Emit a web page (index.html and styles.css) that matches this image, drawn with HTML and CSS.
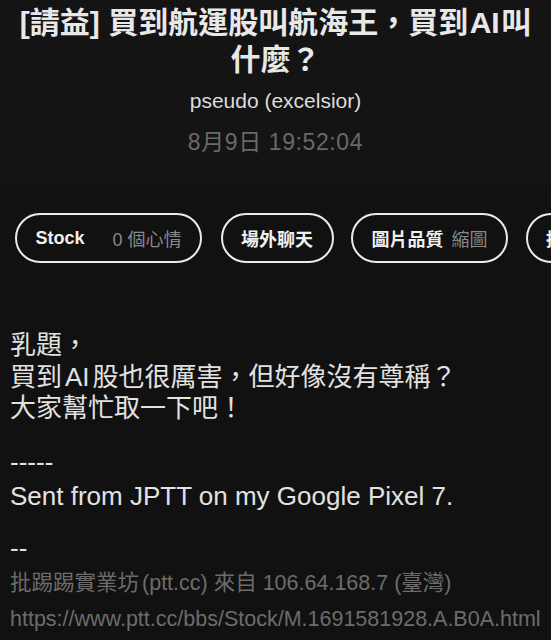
FILE: index.html
```html
<!DOCTYPE html>
<html lang="zh-Hant">
<head>
<meta charset="utf-8">
<title>[請益] 買到航運股叫航海王，買到AI叫什麼？</title>
<link rel="stylesheet" href="styles.css">
</head>
<body>
<div class="page">
  <header class="head">
    <h1 class="title">[請益] 買到航運股叫航海王，買到<span class="latin-t">AI</span>叫什麼？</h1>
    <div class="author">pseudo (excelsior)</div>
    <div class="date">8月9日 19:52:04</div>
  </header>
  <nav class="pills">
    <div class="pill"><span class="strong">Stock</span><span class="muted gap-l">0 個心情</span></div>
    <div class="pill"><span class="strong">場外聊天</span></div>
    <div class="pill"><span class="strong">圖片品質</span><span class="muted gap-s">縮圖</span></div>
    <div class="pill"><span class="strong">推文排序</span></div>
  </nav>
  <article class="body">
    <p class="para">乳題，<br>買到<span class="latin">AI</span>股也很厲害，但好像沒有尊稱？<br>大家幫忙取一下吧！</p>
    <p class="sig-block">-----<br>Sent from JPTT on my Google Pixel 7.</p>
    <p class="dashes">--</p>
    <p class="source">批踢踢實業坊<span class="latin-s">(ptt.cc)</span> 來自 106.64.168.7 (臺灣)</p>
    <p class="source">https://www.ptt.cc/bbs/Stock/M.1691581928.A.B0A.html</p>
  </article>
</div>
</body>
</html>
```
FILE: styles.css
```css
html, body {
  margin: 0;
  padding: 0;
  background: #111111;
}
body {
  font-family: "Liberation Sans", "Noto Sans CJK TC", sans-serif;
  color: #e2e2e2;
  width: 551px;
  height: 640px;
  overflow: hidden;
}
.page {
  display: flex;
  flex-direction: column;
}
.head {
  background: #141414;
  height: 185px;
  box-sizing: border-box;
  padding: 4px 12px 0;
  text-align: center;
}
.title {
  margin: 0;
  font-size: 30px;
  line-height: 37px;
  font-weight: 700;
  color: #e8e8e8;
}
.latin-t {
  margin: 0 1.5px;
}
.latin {
  margin: 0 3px;
}
.latin-s {
  margin-left: 3px;
}
.author {
  margin-top: 8px;
  font-size: 21px;
  line-height: 30px;
  color: #dcdcdc;
}
.date {
  margin-top: 11px;
  font-size: 23px;
  line-height: 31px;
  letter-spacing: 0.6px;
  color: #696969;
}
.pills {
  display: flex;
  gap: 17.5px;
  padding: 28px 0 0 15px;
  overflow: hidden;
  white-space: nowrap;
}
.pill {
  flex: none;
  height: 50px;
  box-sizing: border-box;
  border: 2.5px solid #ececec;
  border-radius: 25px;
  padding: 0 18.5px;
  display: flex;
  align-items: center;
  font-size: 18px;
}
.pill:first-child {
  margin-right: 1px;
}
.strong {
  font-weight: 700;
  color: #f0f0f0;
}
.muted {
  color: #8a8a8a;
}
.gap-l { margin-left: 28px; }
.gap-s { margin-left: 8px; }
.body {
  padding: 67px 10px 0;
}
.body p {
  margin: 0;
}
.para {
  font-size: 26px;
  line-height: 31.5px;
}
.sig-block {
  margin-top: 20px !important;
  font-size: 26px;
  line-height: 34px;
}
.dashes {
  margin-top: 18px !important;
  font-size: 26px;
  line-height: 34px;
}
.source {
  font-size: 21.5px;
  line-height: 36px;
  color: #6c6c6c;
  white-space: nowrap;
}
```
